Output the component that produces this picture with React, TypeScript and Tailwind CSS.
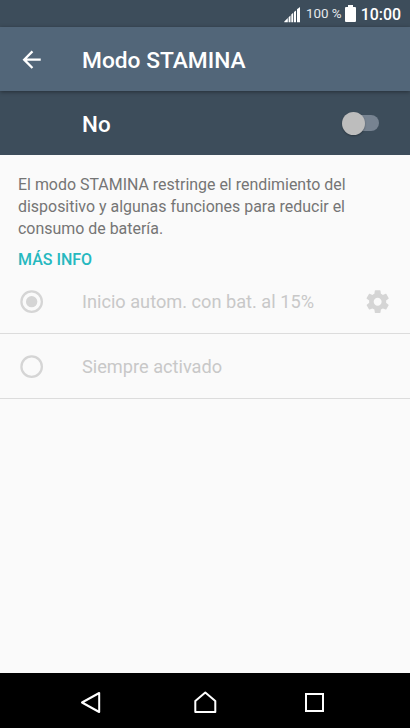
import React from 'react';

interface OptionRowProps {
  label: string;
  selected?: boolean;
  hasSettings?: boolean;
}

const SignalIcon = () => (
  <svg className="h-4 w-4" viewBox="0 0 16 16" fill="#fff">
    <path d="M13 2.2 16 0v15.2h-3z" />
    <path d="M10 5 12 3.4v11.8h-2z" />
    <path d="M7.3 7.6 9.2 5.8v9.4H7.3z" />
    <path d="M4.6 10.2 6.5 8.4v6.8H4.6z" />
    <path d="M.3 14.4 3.8 11.1v4.1H.3z" />
  </svg>
);

const BatteryIcon = () => (
  <svg className="h-[17px] w-[11px]" viewBox="0 0 11 17" fill="#fff">
    <path d="M3 0h5v2h2a1 1 0 0 1 1 1v13a1 1 0 0 1-1 1H1a1 1 0 0 1-1-1V3a1 1 0 0 1 1-1h2z" />
  </svg>
);

const RadioIcon = ({ selected }: { selected?: boolean }) => (
  <svg className="size-[27.3px]" viewBox="0 0 24 24" fill="none">
    <circle cx="12" cy="12" r="9" stroke="#d5d5d5" strokeWidth="2" />
    {selected && <circle cx="12" cy="12" r="5" fill="#d5d5d5" />}
  </svg>
);

const GearIcon = () => (
  <svg className="size-[27.3px]" viewBox="0 0 24 24" fill="#d5d5d5">
    <path d="M19.43 12.98c.04-.32.07-.64.07-.98s-.03-.66-.07-.98l2.11-1.65c.19-.15.24-.42.12-.64l-2-3.46c-.12-.22-.39-.3-.61-.22l-2.49 1c-.52-.4-1.08-.73-1.69-.98l-.38-2.65C14.46 2.18 14.25 2 14 2h-4c-.25 0-.46.18-.49.42l-.38 2.65c-.61.25-1.17.59-1.69.98l-2.49-1c-.23-.09-.49 0-.61.22l-2 3.46c-.13.22-.07.49.12.64l2.11 1.65c-.04.32-.07.65-.07.98s.03.66.07.98l-2.11 1.65c-.19.15-.24.42-.12.64l2 3.46c.12.22.39.3.61.22l2.49-1c.52.4 1.08.73 1.69.98l.38 2.65c.03.24.24.42.49.42h4c.25 0 .46-.18.49-.42l.38-2.65c.61-.25 1.17-.59 1.69-.98l2.49 1c.23.09.49 0 .61-.22l2-3.46c.12-.22.07-.49-.12-.64l-2.11-1.65zM12 15.5c-1.93 0-3.5-1.57-3.5-3.5s1.57-3.5 3.5-3.5 3.5 1.57 3.5 3.5-1.57 3.5-3.5 3.5z" />
  </svg>
);

const OptionRow: React.FC<OptionRowProps> = ({ label, selected, hasSettings }) => (
  <li className="flex h-[65px] items-center border-b border-[#dcdcdc] pl-[18px] pr-[18.5px] pt-0.5 text-[18.2px] text-[#c8c8c8]">
    <RadioIcon selected={selected} />
    <span className="ml-[36.7px] flex-1 whitespace-nowrap">{label}</span>
    {hasSettings && <GearIcon />}
  </li>
);

export default function App() {
  return (
    <div className="flex h-[728px] w-[410px] flex-col overflow-hidden bg-[#fafafa] font-['Roboto',sans-serif]">
      <div className="flex h-[27px] shrink-0 items-center justify-end bg-[#3d4d5b] pr-[9px] pt-0.5 text-white">
        <SignalIcon />
        <span className="ml-[5.5px] text-[13.4px] text-[#e4e8eb]">100 %</span>
        <span className="-mt-0.5 ml-[3.5px]">
          <BatteryIcon />
        </span>
        <span className="ml-[4.5px] text-[15.9px] font-medium">10:00</span>
      </div>

      <header className="z-10 flex h-16 shrink-0 items-center bg-[#526679] pl-[18px] pt-px text-white shadow-[0_1px_4px_rgba(0,0,0,0.4)]">
        <svg className="size-[27.3px]" viewBox="0 0 24 24" fill="#fff">
          <path d="M20 11H7.83l5.59-5.59L12 4l-8 8 8 8 1.41-1.41L7.83 13H20v-2z" />
        </svg>
        <h1 className="ml-[36.7px] pt-[3px] text-[22.75px] font-medium">Modo STAMINA</h1>
      </header>

      <div className="flex h-16 shrink-0 items-center justify-between bg-[#3d4d5b] pl-[82px] pr-[31px] text-white">
        <span className="pt-[3px] text-[22.4px] font-medium">No</span>
        <button role="switch" aria-checked="false" aria-label="Modo STAMINA" className="flex h-[23px] w-[37px] items-center">
          <span className="z-10 size-[23px] shrink-0 rounded-full bg-[#bdbdbd] shadow-[0_1px_2px_rgba(0,0,0,0.3)]" />
          <span className="-ml-4 h-4 w-[30px] shrink-0 rounded-full bg-[#778391]" />
        </button>
      </div>

      <main className="flex-1">
        <div className="px-[18px] pt-[19px]">
          <p className="text-[15.95px] leading-[22px] text-[#757575]">
            El modo STAMINA restringe el rendimiento del
            <br />
            dispositivo y algunas funciones para reducir el
            <br />
            consumo de batería.
          </p>
          <a className="mt-[9px] block text-[16px] leading-[22px] font-medium text-[#26b8bf]">MÁS INFO</a>
        </div>
        <ul className="-mt-[2px]">
          <OptionRow label="Inicio autom. con bat. al 15%" selected hasSettings />
          <OptionRow label="Siempre activado" />
        </ul>
      </main>

      <nav className="flex h-[55px] shrink-0 items-center bg-black pl-[79px] pt-[3px]">
        <svg className="h-6 w-[22px]" viewBox="0 0 22 24" fill="none" stroke="#fff" strokeWidth="2" strokeLinejoin="round">
          <path d="M3 12.500 20.200 3v19z" />
        </svg>
        <svg className="ml-[92px] h-6 w-6" viewBox="0 0 24 24" fill="none" stroke="#fff" strokeWidth="2" strokeLinejoin="round">
          <path d="M2.300 11 12.300 2.500l10 8.500v11h-20z" />
        </svg>
        <svg className="ml-[86px] h-6 w-[22px]" viewBox="0 0 22 24" fill="none" stroke="#fff" strokeWidth="2">
          <path d="M3 4h17v17H3z" />
        </svg>
      </nav>
    </div>
  );
}
